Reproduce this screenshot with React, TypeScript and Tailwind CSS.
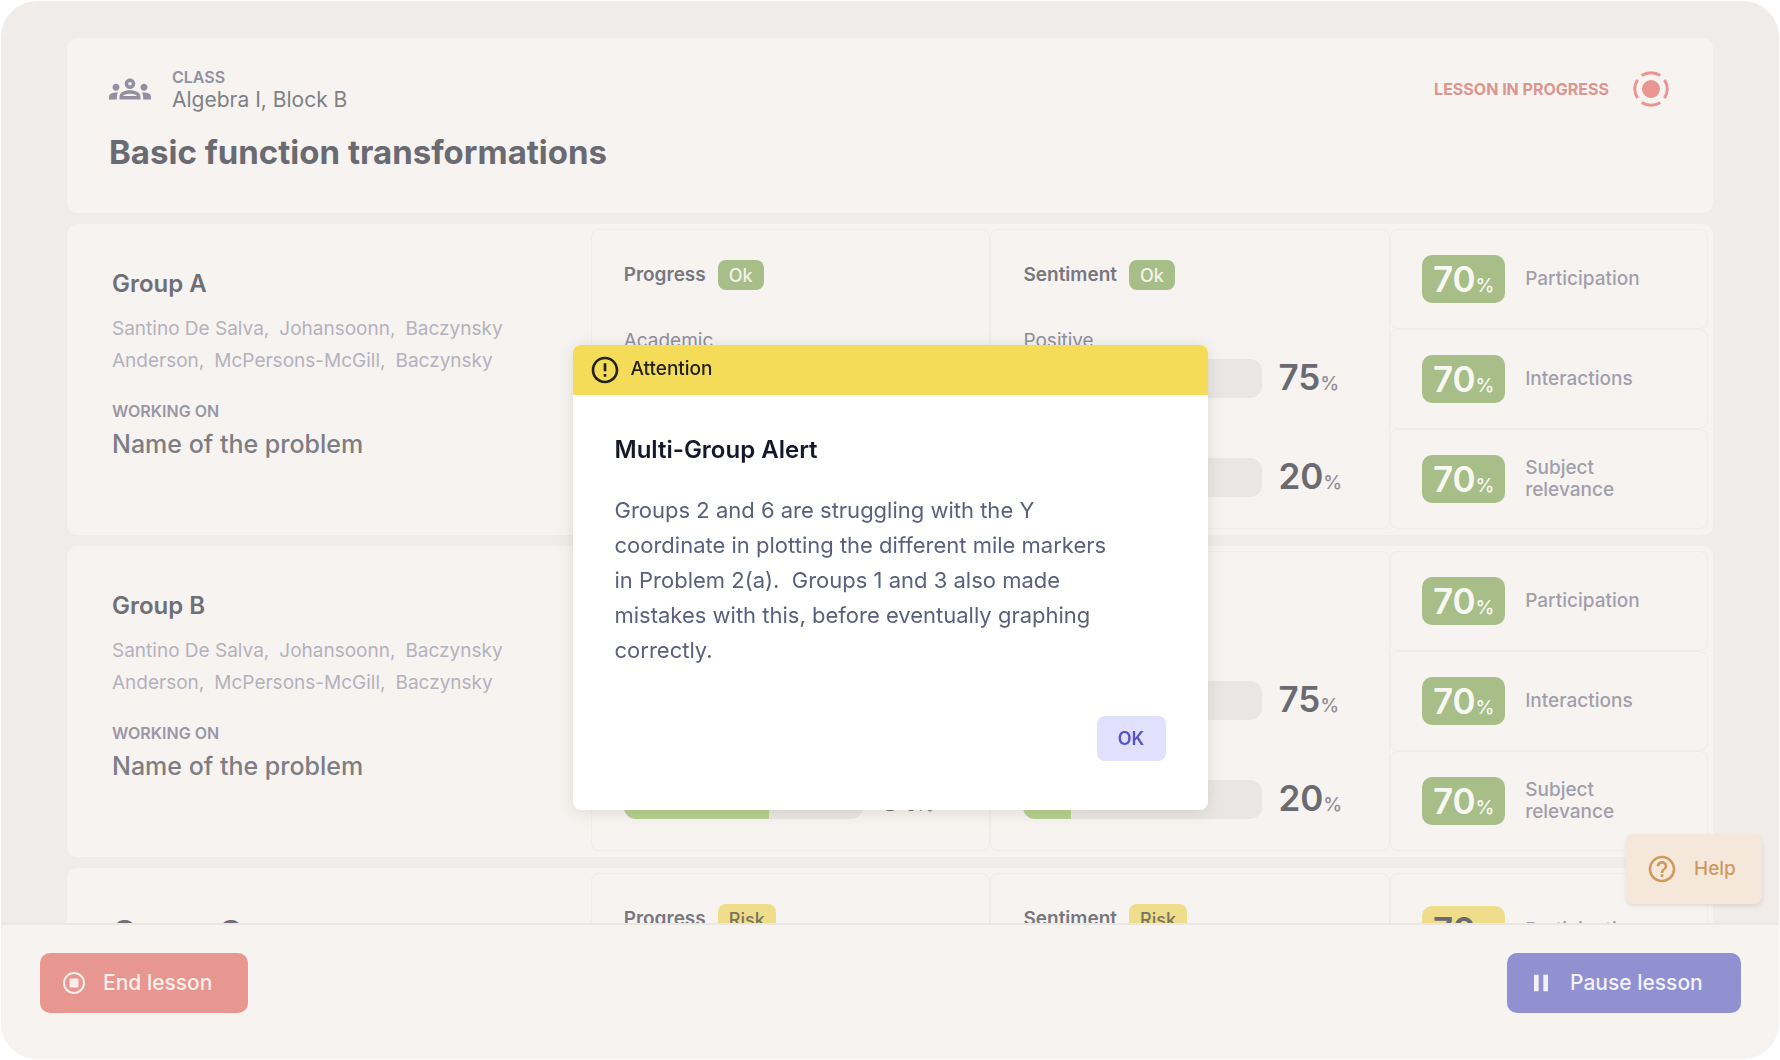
import { MdOutlineGroups, MdErrorOutline, MdHelpOutline, MdPause } from "react-icons/md";

type Tone = "ok" | "risk";

interface Metric {
  label: string;
  value: number;
}

interface Panel {
  title: string;
  metrics: Metric[];
}

interface Group {
  name: string;
  tone: Tone;
  panels: Panel[];
}

const panels: Panel[] = [
  { title: "Progress", metrics: [{ label: "Academic", value: 75 }, { label: "Social", value: 61 }] },
  { title: "Sentiment", metrics: [{ label: "Positive", value: 75 }, { label: "Negative", value: 20 }] },
];

const groups: Group[] = [
  { name: "Group A", tone: "ok", panels },
  { name: "Group B", tone: "ok", panels },
  { name: "Group C", tone: "risk", panels },
];

const members = [
  ["Santino De Salva,", "Johansoonn,", "Baczynsky"],
  ["Anderson,", "McPersons-McGill,", "Baczynsky"],
];

const scores = ["Participation", "Interactions", "Subject relevance"];

function RecordingIcon() {
  return (
    <svg viewBox="0 0 36 36" className="size-9" fill="none" stroke="#e8968f" strokeWidth="3" aria-hidden="true">
      <circle cx="18" cy="18" r="9" fill="#e8968f" stroke="none" />
      <path d="M8.8 4.6A16.2 16.2 0 0 1 27.2 4.6" />
      <path d="M31.4 8.8A16.2 16.2 0 0 1 31.4 27.2" />
      <path d="M27.2 31.4A16.2 16.2 0 0 1 8.8 31.4" />
      <path d="M4.6 27.2A16.2 16.2 0 0 1 4.6 8.8" />
    </svg>
  );
}

function StopIcon() {
  return (
    <svg viewBox="0 0 24 24" className="size-6" fill="none" aria-hidden="true">
      <circle cx="12" cy="12" r="10" stroke="currentColor" strokeWidth="2" />
      <rect x="7.5" y="7.5" width="9" height="9" rx="1" fill="currentColor" />
    </svg>
  );
}

function MetricPanel({ panel, tone }: { panel: Panel; tone: Tone }) {
  return (
    <section className="rounded-lg border border-[#f0ecea] px-8 pt-[30px]">
      <div className="flex items-center gap-3">
        <h3 className="text-[19px] font-semibold text-[#77787f]">{panel.title}</h3>
        {tone === "ok" ? (
          <span className="flex h-[30px] items-center rounded-lg bg-[#a8be89] px-[11px] text-[18px] font-medium text-[#f5f3ea]">Ok</span>
        ) : (
          <span className="flex h-[30px] items-center rounded-lg bg-[#efdd8c] px-[11px] text-[18px] font-medium text-[#77745f]">Risk</span>
        )}
      </div>
      <div className="mt-[35px] flex flex-col gap-[26px]">
        {panel.metrics.map((metric) => (
          <div key={metric.label}>
            <p className="text-[19px] leading-8 text-[#8f8f9a]">{metric.label}</p>
            <div className="mt-0.5 flex h-[39px] items-center gap-4">
              <div className="h-[39px] w-[239px] shrink-0 overflow-hidden rounded-xl bg-[#eae6e3]">
                <div className="h-full bg-[#b4d08e]" style={{ width: `${metric.value}%` }} />
              </div>
              <p className="pb-[3px] text-[35px] leading-9 font-semibold text-[#6a6b72]">
                {metric.value}
                <span className="text-[19px] leading-none font-medium text-[#8f8f9a]">%</span>
              </p>
            </div>
          </div>
        ))}
      </div>
    </section>
  );
}

function ScoreCell({ label, tone }: { label: string; tone: Tone }) {
  return (
    <li
      className={
        tone === "ok"
          ? "flex h-[100px] items-center gap-5 rounded-lg border border-[#f0ecea] px-[31px]"
          : "flex h-[114px] items-center gap-5 rounded-lg border border-[#f0ecea] px-[31px]"
      }
    >
      <span
        className={
          tone === "ok"
            ? "flex h-12 w-[83px] items-baseline justify-center rounded-[10px] bg-[#a8be89] text-[35px] leading-12 font-semibold text-[#f9f7f2]"
            : "flex h-12 w-[83px] items-baseline justify-center rounded-[10px] bg-[#efdd8c] text-[35px] leading-12 font-semibold text-[#6a6b72]"
        }
      >
        70<span className="text-[19px] font-medium">%</span>
      </span>
      <span className="max-w-[130px] text-[19px] leading-[22px] font-medium text-[#a09fab]">{label}</span>
    </li>
  );
}

function GroupCard({ group }: { group: Group }) {
  return (
    <article className="grid grid-cols-[524fr_400fr_400fr_318fr] rounded-[10px] bg-[#f7f3f0] pt-[5px] pr-[5px] pb-1.5">
      <div className="pt-[39px] pl-[45px]">
        <h2
          className={
            group.tone === "ok"
              ? "text-[24px] leading-8 font-semibold text-[#6f7077]"
              : "text-[33px] leading-10 font-semibold text-[#6f7077]"
          }
        >
          {group.name}
        </h2>
        <div className="mt-[13px] text-[19px] leading-8 text-[#b3b2bc]">
          {members.map((row) => (
            <p key={row[0]} className="flex gap-2.5">
              {row.map((name) => (
                <span key={name}>{name}</span>
              ))}
            </p>
          ))}
        </div>
        <p className="mt-[22px] text-[16px] leading-6 font-semibold text-[#9897a5]">WORKING ON</p>
        <p className="mt-[5px] text-[25px] leading-8 font-medium text-[#7d7e84]">Name of the problem</p>
      </div>
      {group.panels.map((panel) => (
        <MetricPanel key={panel.title} panel={panel} tone={group.tone} />
      ))}
      <ul>
        {scores.map((label) => (
          <ScoreCell key={label} label={label} tone={group.tone} />
        ))}
      </ul>
    </article>
  );
}

function AttentionDialog() {
  return (
    <div className="fixed inset-0 flex items-center justify-center pt-[94px]">
      <div
        role="alertdialog"
        aria-labelledby="alert-title"
        aria-describedby="alert-text"
        className="w-[635px] overflow-hidden rounded-lg bg-white shadow-[0_2px_16px_rgba(90,85,60,0.16)]"
      >
        <div className="flex h-[50px] items-center gap-2.5 bg-[#f4db58] px-4 text-[#22221c]">
          <MdErrorOutline className="size-8" aria-hidden="true" />
          <p className="text-[19px] font-medium">Attention</p>
        </div>
        <div className="px-[42px] pt-[39px] pb-[49px]">
          <h2 id="alert-title" className="text-[24px] leading-8 font-semibold text-[#15172b]">
            Multi-Group Alert
          </h2>
          <p id="alert-text" className="mt-[27px] max-w-[505px] text-[22px] leading-[35px] text-[#5a607d]">
            Groups 2 and 6 are struggling with the Y coordinate in plotting the different mile markers in Problem
            2(a).&nbsp; Groups 1 and 3 also made mistakes with this, before eventually graphing correctly.
          </p>
          <div className="mt-12 flex justify-end">
            <button type="button" className="h-[45px] w-[69px] rounded-lg bg-[#e1e1fe] text-[18px] font-semibold text-[#5653cb]">
              OK
            </button>
          </div>
        </div>
      </div>
    </div>
  );
}

export default function App() {
  return (
    <div className="h-screen bg-white p-px font-['Inter',sans-serif]">
      <div className="flex h-full flex-col overflow-hidden rounded-[36px] bg-[#f0ece9]">
        <div className="relative min-h-0 flex-1">
          <main className="flex h-full flex-col gap-[11px] overflow-hidden px-[66px] pt-[37px] *:shrink-0">
            <header className="flex items-start justify-between rounded-[10px] bg-[#f7f3f0] pt-7 pr-11 pb-[43px] pl-[42px]">
              <div>
                <div className="flex items-center gap-[21px]">
                  <MdOutlineGroups className="size-[42px] text-[#9190a0]" aria-hidden="true" />
                  <div>
                    <p className="text-[16px] leading-[22px] font-semibold text-[#9190a0]">CLASS</p>
                    <p className="text-[21px] leading-6 text-[#808187]">Algebra I, Block B</p>
                  </div>
                </div>
                <h1 className="mt-[22px] text-[33px] leading-9 font-bold text-[#6a6b72]">Basic function transformations</h1>
              </div>
              <div className="mt-[5px] flex items-center gap-6">
                <p className="text-[16px] font-bold text-[#dc958f]">LESSON IN PROGRESS</p>
                <RecordingIcon />
              </div>
            </header>
            {groups.map((group) => (
              <GroupCard key={group.name} group={group} />
            ))}
          </main>
          <button
            type="button"
            className="absolute right-[17px] bottom-[19px] flex h-[70px] w-[136px] items-center gap-4 rounded-lg bg-[#f5e8db] pl-5 text-[19px] font-medium text-[#cf9a5e] shadow-[0_2px_4px_rgba(0,0,0,0.1)]"
          >
            <MdHelpOutline className="size-8" aria-hidden="true" />
            Help
          </button>
        </div>
        <footer className="flex h-[136px] shrink-0 items-start justify-between border-t-2 border-[#eae6e2] bg-[#f7f3f0] pt-7 pr-[38px] pl-[39px]">
          <button
            type="button"
            className="flex h-[60px] w-[208px] items-center gap-[17px] rounded-[10px] bg-[#e79790] pl-[22px] text-[21px] font-medium text-[#fbeeeb]"
          >
            <StopIcon />
            End lesson
          </button>
          <button
            type="button"
            className="flex h-[60px] w-[234px] items-center gap-[15px] rounded-[10px] bg-[#9190d0] pl-5 text-[21px] font-medium text-[#f3f1f8]"
          >
            <MdPause className="size-7" aria-hidden="true" />
            Pause lesson
          </button>
        </footer>
      </div>
      <AttentionDialog />
    </div>
  );
}
